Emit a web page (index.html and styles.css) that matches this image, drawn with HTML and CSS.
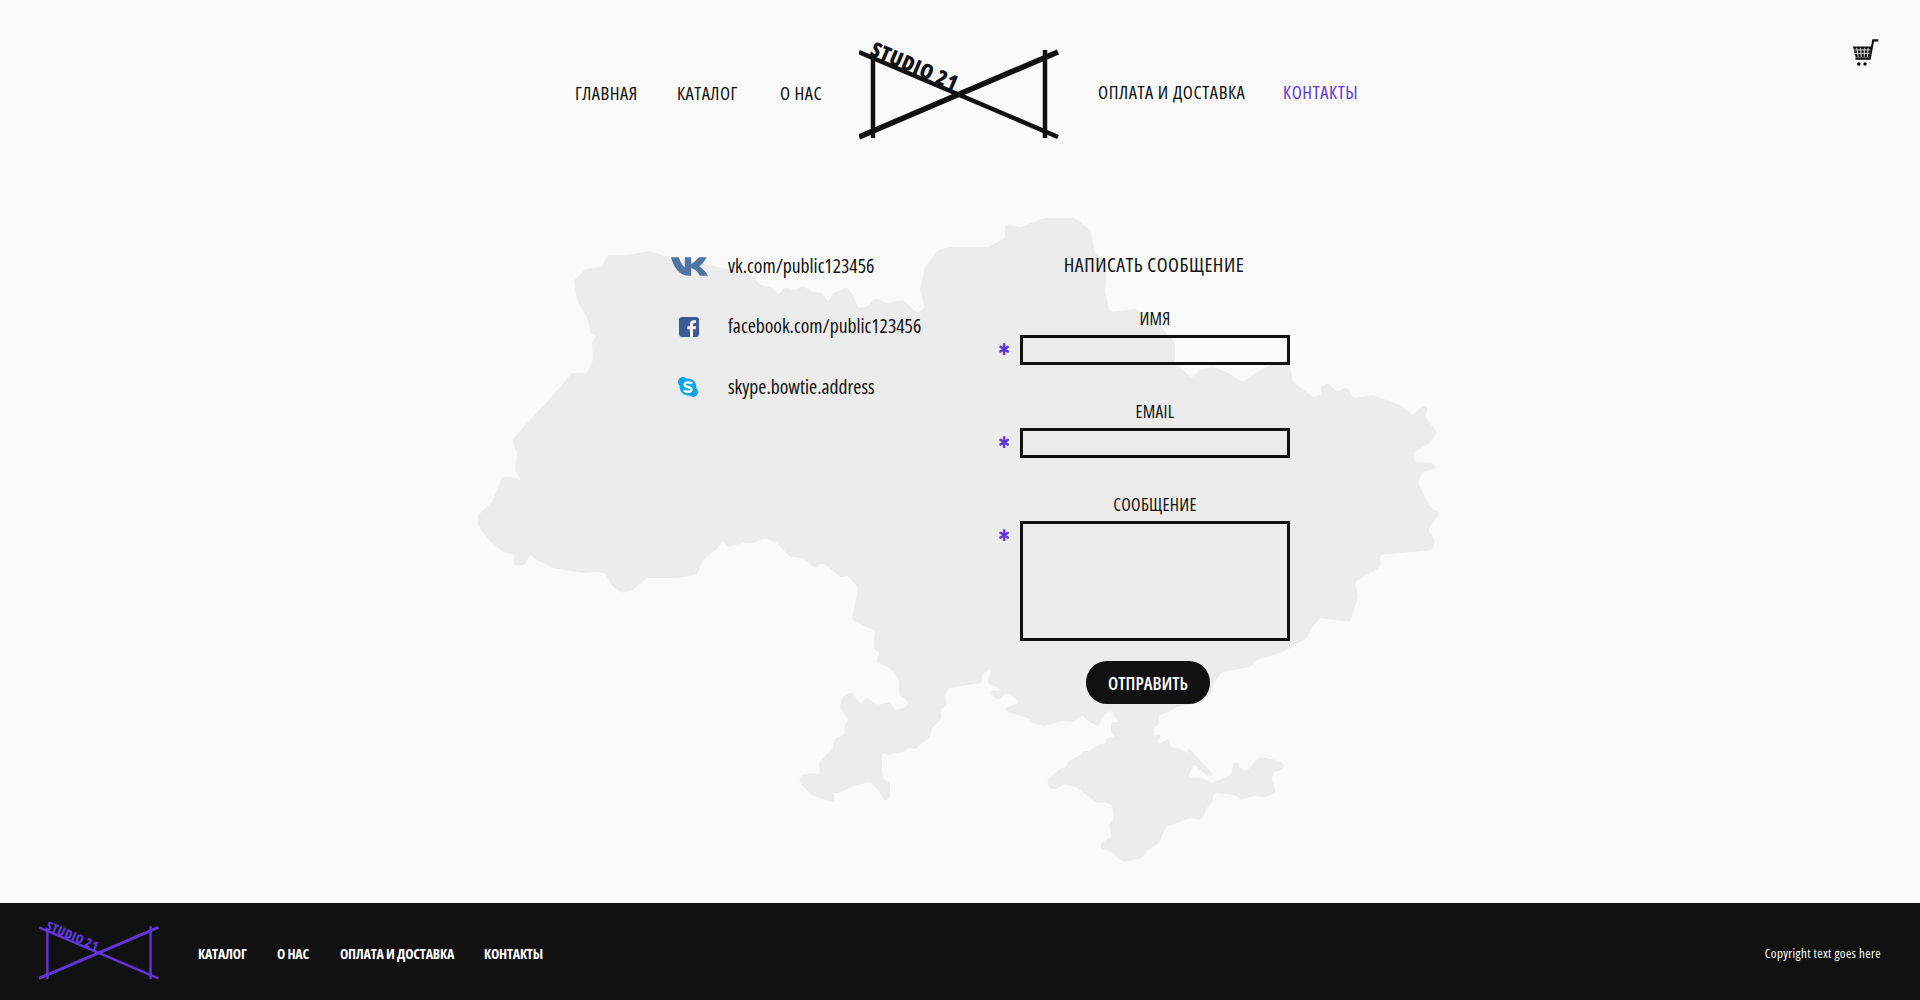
FILE: index.html
```html
<!DOCTYPE html>
<html lang="ru">
<head>
<meta charset="utf-8">
<title>Studio 21 — Контакты</title>
<link rel="stylesheet" href="styles.css">
</head>
<body>
<header class="header">
  <nav class="nav nav-left">
    <a href="#">ГЛАВНАЯ</a>
    <a href="#">КАТАЛОГ</a>
    <a href="#">О НАС</a>
  </nav>
  <svg class="logo" viewBox="0 -20 200 120">
    <g class="logo-lines">
      <path d="M0 4 L199 89"/>
      <path class="thick" d="M0 89 L199 4"/>
      <path d="M14 7 V90"/>
      <path d="M186 2 V90"/>
    </g>
    <text class="logo-text" x="10" y="7" transform="rotate(23 10 7)">STUDIO 21</text>
  </svg>
  <nav class="nav nav-right">
    <a href="#">ОПЛАТА И ДОСТАВКА</a>
    <a href="#" class="active">КОНТАКТЫ</a>
  </nav>
  <svg class="cart" viewBox="100 58 80 82">
    <path class="cart-basket" d="M102 80 H156 L150 112 H110 Z"/>
    <path class="cart-grid" d="M113 84 L117 110 M124 84 L126 110 M135 84 L135 110 M146 84 L144 110 M106 90 H153 M108 100 H152"/>
    <path class="cart-line" d="M176 62 H161 L151 116 H109"/>
    <circle cx="119" cy="131" r="5"/>
    <circle cx="137" cy="131" r="5"/>
  </svg>
</header>

<main class="main">
  <svg class="map" viewBox="470 210 980 700">
    <defs>
      <filter id="coast" x="-2%" y="-2%" width="104%" height="104%" color-interpolation-filters="sRGB">
        <feGaussianBlur stdDeviation="1.6"/>
        <feComponentTransfer>
          <feFuncA type="linear" slope="5" intercept="-2"/>
        </feComponentTransfer>
      </filter>
    </defs>
    <g class="map-land" filter="url(#coast)">
      <path d="M580 275 L585 269 L602 267 L607 255 L627 255 L650 251 L670 258 L710 265 L752 275 L760 285 L772 287 L778 295 L785 287 L795 290 L803 286 L813 292 L823 293 L828 303 L833 293 L847 287 L853 295 L858 308 L867 307 L875 298 L887 303 L903 300 L917 313 L925 308 L920 290 L925 267 L938 250 L951 247 L989 247 L1005 238 L1005 225 L1021 227 L1044 218 L1075 218 L1091 231 L1095 254 L1107 262 L1105 292 L1110 312 L1136 309 L1155 320 L1175 342 L1175 363 L1192 378 L1200 370 L1213 367 L1227 372 L1242 382 L1257 372 L1277 362 L1290 367 L1293 382 L1313 397 L1322 395 L1320 387 L1328 383 L1337 392 L1347 387 L1353 398 L1373 395 L1400 405 L1413 415 L1423 405 L1428 408 L1425 417 L1437 432 L1430 443 L1413 453 L1415 462 L1433 463 L1437 468 L1422 472 L1418 483 L1430 507 L1440 513 L1428 530 L1435 540 L1433 550 L1380 555 L1380 567 L1355 582 L1358 597 L1350 622 L1320 618 L1312 627 L1307 638 L1283 652 L1257 660 L1250 667 L1222 672 L1214 683 L1210 695 L1200 703 L1176 707 L1169 712 L1159 715 L1159 725 L1150 727 L1142 728 L1131 723 L1124 725 L1114 717 L1111 710 L1102 717 L1099 727 L1086 720 L1083 715 L1073 722 L1061 721 L1045 726 L1031 723 L1028 718 L1014 714 L1007 712 L1004 708 L1019 703 L1014 697 L1006 693 L999 700 L991 695 L991 690 L1007 692 L987 683 L992 668 L983 673 L981 683 L949 688 L945 695 L947 705 L940 710 L942 718 L932 728 L930 737 L914 750 L911 747 L901 753 L887 755 L882 752 L882 770 L883 778 L890 783 L890 797 L885 802 L880 793 L871 782 L856 785 L839 793 L833 793 L835 800 L832 802 L811 795 L799 782 L801 775 L814 773 L821 775 L818 763 L833 748 L835 738 L844 735 L845 723 L849 720 L840 708 L842 697 L852 692 L861 705 L866 697 L878 705 L890 702 L895 710 L907 707 L909 702 L899 695 L899 680 L890 668 L876 662 L880 652 L874 650 L874 640 L875 631 L852 620 L858 587 L847 575 L842 578 L823 563 L815 568 L803 558 L790 557 L777 543 L765 538 L753 543 L743 543 L728 547 L722 540 L718 548 L703 560 L697 575 L677 578 L647 578 L633 590 L623 593 L613 587 L605 573 L598 572 L583 573 L553 568 L537 560 L530 555 L525 565 L513 566 L515 555 L503 552 L487 538 L478 525 L478 515 L492 502 L502 477 L512 477 L523 482 L515 470 L517 453 L512 440 L527 423 L547 402 L572 373 L587 373 L593 360 L592 342 L597 336 L590 333 L588 320 L577 300 L574 280 Z"/>
      <path d="M1047 780 L1061 768 L1066 768 L1068 761 L1081 755 L1084 750 L1088 752 L1100 743 L1105 745 L1107 738 L1116 737 L1111 733 L1111 722 L1116 722 L1154 723 L1154 737 L1162 733 L1157 745 L1169 738 L1171 748 L1178 748 L1186 752 L1193 767 L1188 775 L1191 778 L1202 778 L1212 783 L1231 775 L1233 763 L1238 762 L1241 770 L1248 770 L1257 758 L1266 758 L1281 761 L1285 767 L1279 771 L1273 772 L1272 780 L1276 792 L1266 797 L1253 796 L1241 800 L1235 795 L1214 793 L1212 803 L1207 807 L1202 820 L1190 818 L1166 827 L1159 843 L1147 850 L1142 858 L1124 862 L1117 858 L1112 852 L1100 848 L1102 842 L1112 837 L1109 825 L1114 818 L1112 805 L1105 802 L1097 803 L1076 787 L1064 784 L1055 790 L1049 788 Z"/>
      <path d="M1186 745 L1214 775 L1209 777 L1191 762 Z"/>
    </g>
  </svg>

  <section class="contacts">
    <a class="contact" href="#">
      <span class="contact-icon">
        <svg class="icon-vk" viewBox="62 85 110 55"><path d="M62 85 H85 C90 100 98 112 103 115 V85 H122 V105 C130 102 138 92 145 85 H168 C162 98 152 108 146 112 C154 118 166 128 172 140 H148 C142 128 132 120 122 118 V140 H112 C88 140 70 115 62 85 Z"/></svg>
      </span>
      <span>vk.com/public123456</span>
    </a>
    <a class="contact" href="#">
      <span class="contact-icon">
        <svg class="icon-fb" viewBox="0 0 20 20"><rect width="20" height="20" rx="3"/><path d="M14 20 V12.3 H16.6 L17 9.3 H14 V7.6 C14 6.7 14.3 6.1 15.5 6.1 H17 V3.4 C16.7 3.4 15.8 3.3 14.8 3.3 C12.5 3.3 11 4.7 11 7.2 V9.3 H8.4 V12.3 H11 V20 Z"/></svg>
      </span>
      <span>facebook.com/public123456</span>
    </a>
    <a class="contact" href="#">
      <span class="contact-icon">
        <svg class="icon-skype" viewBox="0 0 20 20"><circle cx="5" cy="5" r="5"/><circle cx="15" cy="15" r="5"/><circle cx="10" cy="10" r="8.4"/><path d="M14 6.6 C12.5 4.9 6.8 4.8 6.6 7.6 C6.4 10.6 13.7 9.4 13.5 12.6 C13.3 15.3 7.6 15.3 5.9 13.2"/></svg>
      </span>
      <span>skype.bowtie.address</span>
    </a>
  </section>

  <form class="form">
    <h2 class="form-title">НАПИСАТЬ СООБЩЕНИЕ</h2>
    <div class="field">
      <label class="field-label" for="f-name">ИМЯ</label>
      <span class="star">✱</span>
      <input class="control" id="f-name" type="text">
    </div>
    <div class="field">
      <label class="field-label" for="f-email">EMAIL</label>
      <span class="star">✱</span>
      <input class="control" id="f-email" type="text">
    </div>
    <div class="field">
      <label class="field-label" for="f-msg">СООБЩЕНИЕ</label>
      <span class="star">✱</span>
      <textarea class="control control-area" id="f-msg"></textarea>
    </div>
    <button class="submit" type="button">ОТПРАВИТЬ</button>
  </form>
</main>

<footer class="footer">
  <svg class="footer-logo" viewBox="0 -20 200 120">
    <g class="logo-lines">
      <path d="M0 4 L199 89"/>
      <path class="thick" d="M0 89 L199 4"/>
      <path d="M14 7 V90"/>
      <path d="M186 2 V90"/>
    </g>
    <text class="logo-text" x="10" y="7" transform="rotate(23 10 7)">STUDIO 21</text>
  </svg>
  <nav class="footer-nav">
    <a href="#">КАТАЛОГ</a>
    <a href="#">О НАС</a>
    <a href="#">ОПЛАТА И ДОСТАВКА</a>
    <a href="#">КОНТАКТЫ</a>
  </nav>
  <p class="copyright">Copyright text goes here</p>
</footer>
</body>
</html>
```

FILE: styles.css
```css
* { box-sizing: border-box; }
html, body { margin: 0; height: 1000px; }
body {
  display: flex;
  flex-direction: column;
  background: #fafafa;
  color: #111;
  font-family: "Open Sans", "Liberation Sans", sans-serif;
  font-stretch: 75%;
  font-weight: 500;
  overflow: hidden;
}
a { color: inherit; text-decoration: none; white-space: nowrap; }

.header {
  position: relative;
  height: 196px;
  padding: 28px 0 0 575px;
  display: flex;
  align-items: flex-start;
  gap: 40px;
}
.nav { display: grid; column-gap: 40px; align-items: center; font-size: 18.5px; letter-spacing: .5px; }
.nav a { grid-row: 1; }
.nav-left { grid-template-columns: 62px 63px 40px; height: 128px; }
.nav-right { grid-template-columns: 145px 76px; height: 126px; letter-spacing: .6px; }
.active { color: #5f37d8; }
.logo { width: 200px; height: 120px; flex: none; margin: 0 -1px 0 -1px; }
.logo-lines { fill: none; stroke: #111; stroke-width: 4.5; }
.logo-lines .thick { stroke-width: 5.5; }
.logo-text { font-family: "Open Sans", "Liberation Sans", sans-serif; font-stretch: 75%; font-weight: 800; font-size: 21px; letter-spacing: .6px; fill: #111; }
.cart { position: absolute; left: 1852px; top: 39px; width: 28px; height: 28px; }
.cart-basket { fill: #111; }
.cart-grid { fill: none; stroke: #fafafa; stroke-width: 2.5; }
.cart-line { fill: none; stroke: #111; stroke-width: 6; }

.main {
  position: relative;
  flex: 1;
  display: flex;
  padding: 54px 0 0 671px;
}
.map { position: absolute; left: 470px; top: 14px; width: 980px; height: 700px; }
.map-land { fill: #ececec; }

.contacts {
  position: relative;
  width: 327px;
  display: flex;
  flex-direction: column;
  gap: 30.5px;
}
.contact { display: flex; align-items: center; height: 30px; font-size: 19.6px; }
.contact-icon { width: 56px; flex: none; display: flex; justify-content: flex-start; padding-top: 2px; margin-right: 1px; }
.icon-vk { width: 37px; height: 19px; fill: #4d76a1; margin-top: 1px; }
.icon-fb { width: 20px; height: 20px; margin-left: 8px; }
.icon-fb rect { fill: #3b5a9a; }
.icon-fb path { fill: #fff; }
.icon-skype { width: 20px; height: 20px; margin-left: 7px; fill: #0ea5e6; }
.icon-skype path { fill: none; stroke: #fff; stroke-width: 2.4; }

.form {
  position: relative;
  width: 292px;
  display: flex;
  flex-direction: column;
  align-items: stretch;
}
.form-title {
  margin: 0 0 26px 20px;
  height: 30px;
  line-height: 30px;
  font-size: 20px;
  font-weight: 500;
  letter-spacing: .5px;
  text-align: center;
}
.field {
  display: grid;
  grid-template-columns: 22px 270px;
  grid-template-rows: 24px auto;
  row-gap: 5px;
  margin-bottom: 34px;
}
.field:last-of-type { margin-bottom: 20px; }
.field-label {
  grid-column: 2;
  line-height: 24px;
  font-size: 17.5px;
  letter-spacing: .3px;
  text-align: center;
}
.star {
  grid-column: 1;
  grid-row: 2;
  height: 30px;
  line-height: 30px;
  color: #5f37d8;
  font-family: "DejaVu Sans", sans-serif;
  font-size: 16px;
}
.control {
  grid-column: 2;
  grid-row: 2;
  display: block;
  width: 270px;
  height: 30px;
  border: 3px solid #111;
  border-radius: 0;
  background: transparent;
  resize: none;
  outline: none;
  padding: 0;
}
.control-area { height: 120px; }
.submit {
  align-self: flex-start;
  margin-left: 88px;
  width: 124px;
  height: 43px;
  padding: 0;
  border: 0;
  border-radius: 21px;
  background: #111;
  color: #fff;
  font-family: "Open Sans", "Liberation Sans", sans-serif;
  font-stretch: 75%;
  font-weight: 600;
  font-size: 18px;
}

.footer {
  height: 97px;
  background: #111;
  color: #fff;
  display: flex;
  align-items: center;
  padding: 0 39px;
}
.footer-logo { width: 120px; height: 72px; flex: none; margin-top: -5px; }
.footer-logo .logo-lines { stroke: #5f37d8; stroke-width: 4; }
.footer-logo .logo-lines .thick { stroke-width: 5; }
.footer-logo .logo-text { fill: #5f37d8; }
.footer-nav {
  display: grid;
  grid-template-columns: 48px 32px 113px 59px;
  column-gap: 31px;
  margin-left: 39px;
  padding-top: 3px;
  font-size: 14px;
  font-weight: 700;
  letter-spacing: -.2px;
}
.footer-nav a { grid-row: 1; }
.copyright { margin: 0 0 0 auto; padding-top: 3px; font-size: 13px; font-weight: 400; letter-spacing: .35px; }
```
